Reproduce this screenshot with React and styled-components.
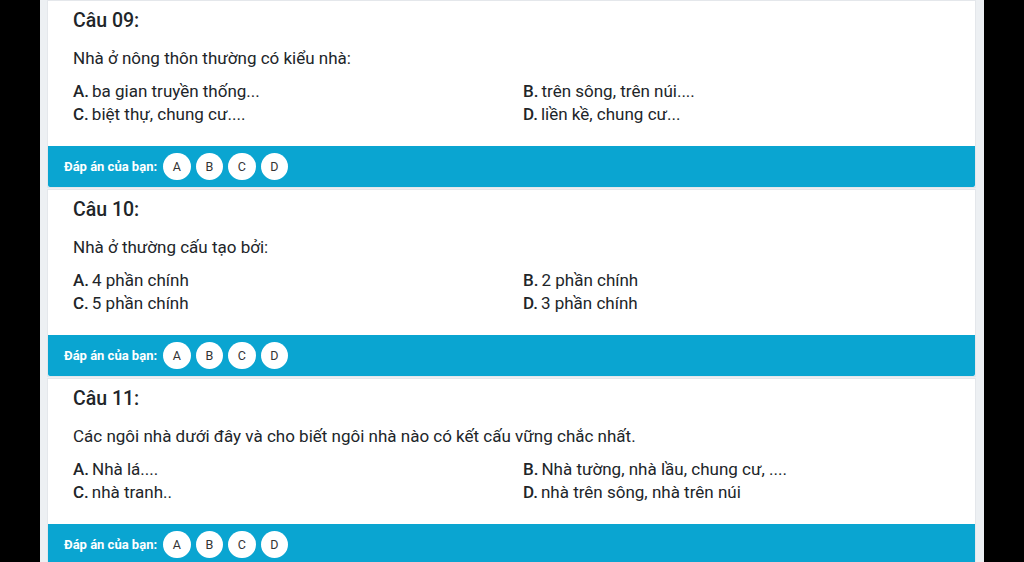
import React from "react";
import styled, { createGlobalStyle } from "styled-components";

const Global = createGlobalStyle`
  html, body { margin: 0; padding: 0; background: #000; overflow: hidden; }
  body { font-family: Roboto, "Noto Sans", "Liberation Sans", sans-serif; }
  #root { width: 1024px; height: 562px; overflow: hidden; }
`;

const Page = styled.div`
  display: flex;
  width: 1024px;
  height: 562px;
  background: #000;
`;

const Side = styled.div`
  width: ${(p) => p.$w}px;
  flex: none;
  background: #000;
`;

const Main = styled.main`
  width: 944px;
  flex: none;
  background: #edf0f3;
  padding: 0 8px 0 7px;
  box-sizing: border-box;
  display: flex;
  flex-direction: column;
  gap: 1px;
`;

const Card = styled.section`
  background: #fff;
  border: 1px solid #e4e7eb;
  flex: none;
`;

const Body = styled.div`
  height: 145px;
  box-sizing: border-box;
  padding: 9px 0 0 25px;
  color: #212529;
`;

const Title = styled.h3`
  margin: 0;
  font-size: 19.5px;
  line-height: 22px;
  font-weight: 500;
`;

const Question = styled.p`
  margin: 15px 0 0;
  font-size: 17px;
  line-height: 22px;
`;

const Options = styled.div`
  margin-top: 11px;
  display: grid;
  grid-template-columns: 450px 1fr;
  font-size: 17px;
  line-height: 23px;
`;

const Option = styled.div`
  white-space: nowrap;
`;

const Letter = styled.span`
  font-weight: 500;
  margin-right: 3px;
`;

const Bar = styled.div`
  height: 41px;
  background: #0aa5d1;
  display: flex;
  align-items: center;
  padding-left: 16px;
  gap: 5px;
  border-radius: 0 0 2px 2px;
`;

const Label = styled.span`
  color: #fff;
  font-size: 13px;
  font-weight: 700;
  margin-right: 1px;
`;

const Choice = styled.button`
  width: 27.5px;
  height: 27.5px;
  border-radius: 50%;
  border: none;
  background: #fff;
  color: #333;
  font-family: Roboto, "Liberation Sans", sans-serif;
  font-size: 12.5px;
  padding: 0;
  display: flex;
  align-items: center;
  justify-content: center;
`;

const questions = [
  {
    n: "09",
    q: "Nhà ở nông thôn thường có kiểu nhà:",
    o: ["ba gian truyền thống...", "trên sông, trên núi....", "biệt thự, chung cư....", "liền kề, chung cư..."],
  },
  {
    n: "10",
    q: "Nhà ở thường cấu tạo bởi:",
    o: ["4 phần chính", "2 phần chính", "5 phần chính", "3 phần chính"],
  },
  {
    n: "11",
    q: "Các ngôi nhà dưới đây và cho biết ngôi nhà nào có kết cấu vững chắc nhất.",
    o: ["Nhà lá....", "Nhà tường, nhà lầu, chung cư, ....", "nhà tranh..", "nhà trên sông, nhà trên núi"],
  },
];

const letters = ["A", "B", "C", "D"];

export default function App() {
  return (
    <>
      <Global />
      <Page>
        <Side $w={40} />
        <Main>
          {questions.map((item) => (
            <Card key={item.n}>
              <Body>
                <Title>Câu {item.n}:</Title>
                <Question>{item.q}</Question>
                <Options>
                  {item.o.map((t, i) => (
                    <Option key={i}>
                      <Letter>{letters[i]}.</Letter>
                      {t}
                    </Option>
                  ))}
                </Options>
              </Body>
              <Bar>
                <Label>Đáp án của bạn:</Label>
                {letters.map((l) => (
                  <Choice key={l}>{l}</Choice>
                ))}
              </Bar>
            </Card>
          ))}
        </Main>
        <Side $w={40} />
      </Page>
    </>
  );
}
